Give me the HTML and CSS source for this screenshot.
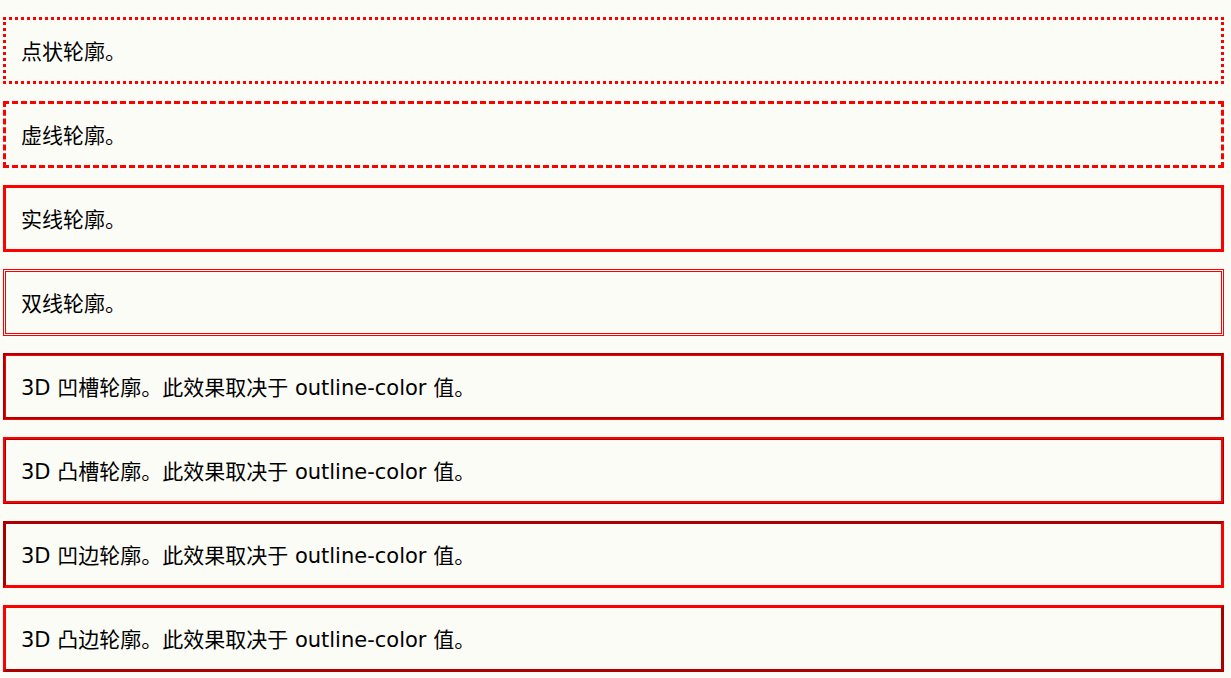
FILE: index.html
```html
<!DOCTYPE html>
<html lang="zh">
<head>
<meta charset="utf-8">
<title>outline-style</title>
<link rel="stylesheet" href="styles.css">
</head>
<body>
<p class="box dotted">点状轮廓。</p>
<p class="box dashed">虚线轮廓。</p>
<p class="box solid">实线轮廓。</p>
<p class="box double">双线轮廓。</p>
<p class="box groove">3D 凹槽轮廓。此效果取决于 outline-color 值。</p>
<p class="box ridge">3D 凸槽轮廓。此效果取决于 outline-color 值。</p>
<p class="box inset">3D 凹边轮廓。此效果取决于 outline-color 值。</p>
<p class="box outset">3D 凸边轮廓。此效果取决于 outline-color 值。</p>
</body>
</html>
```
FILE: styles.css
```css
html, body {
  margin: 0;
  background: #fcfcf7;
}
body {
  padding: 20px 10px 0 6px;
  font-family: "DejaVu Sans", "Noto Sans CJK SC", sans-serif;
  font-size: 21px;
  color: #000;
}
.box {
  box-sizing: border-box;
  height: 61px;
  margin: 0 0 23px 0;
  padding: 0 15px 2px;
  display: flex;
  align-items: center;
  outline: 3px solid #ff0000;
}
.dotted { outline-style: dotted; }
.dashed { outline-style: dashed; }
.solid { outline-style: solid; }
.double { outline-style: double; }
.groove { outline-style: groove; }
.ridge { outline-style: ridge; }
.inset { outline-style: inset; }
.outset { outline-style: outset; }
```
